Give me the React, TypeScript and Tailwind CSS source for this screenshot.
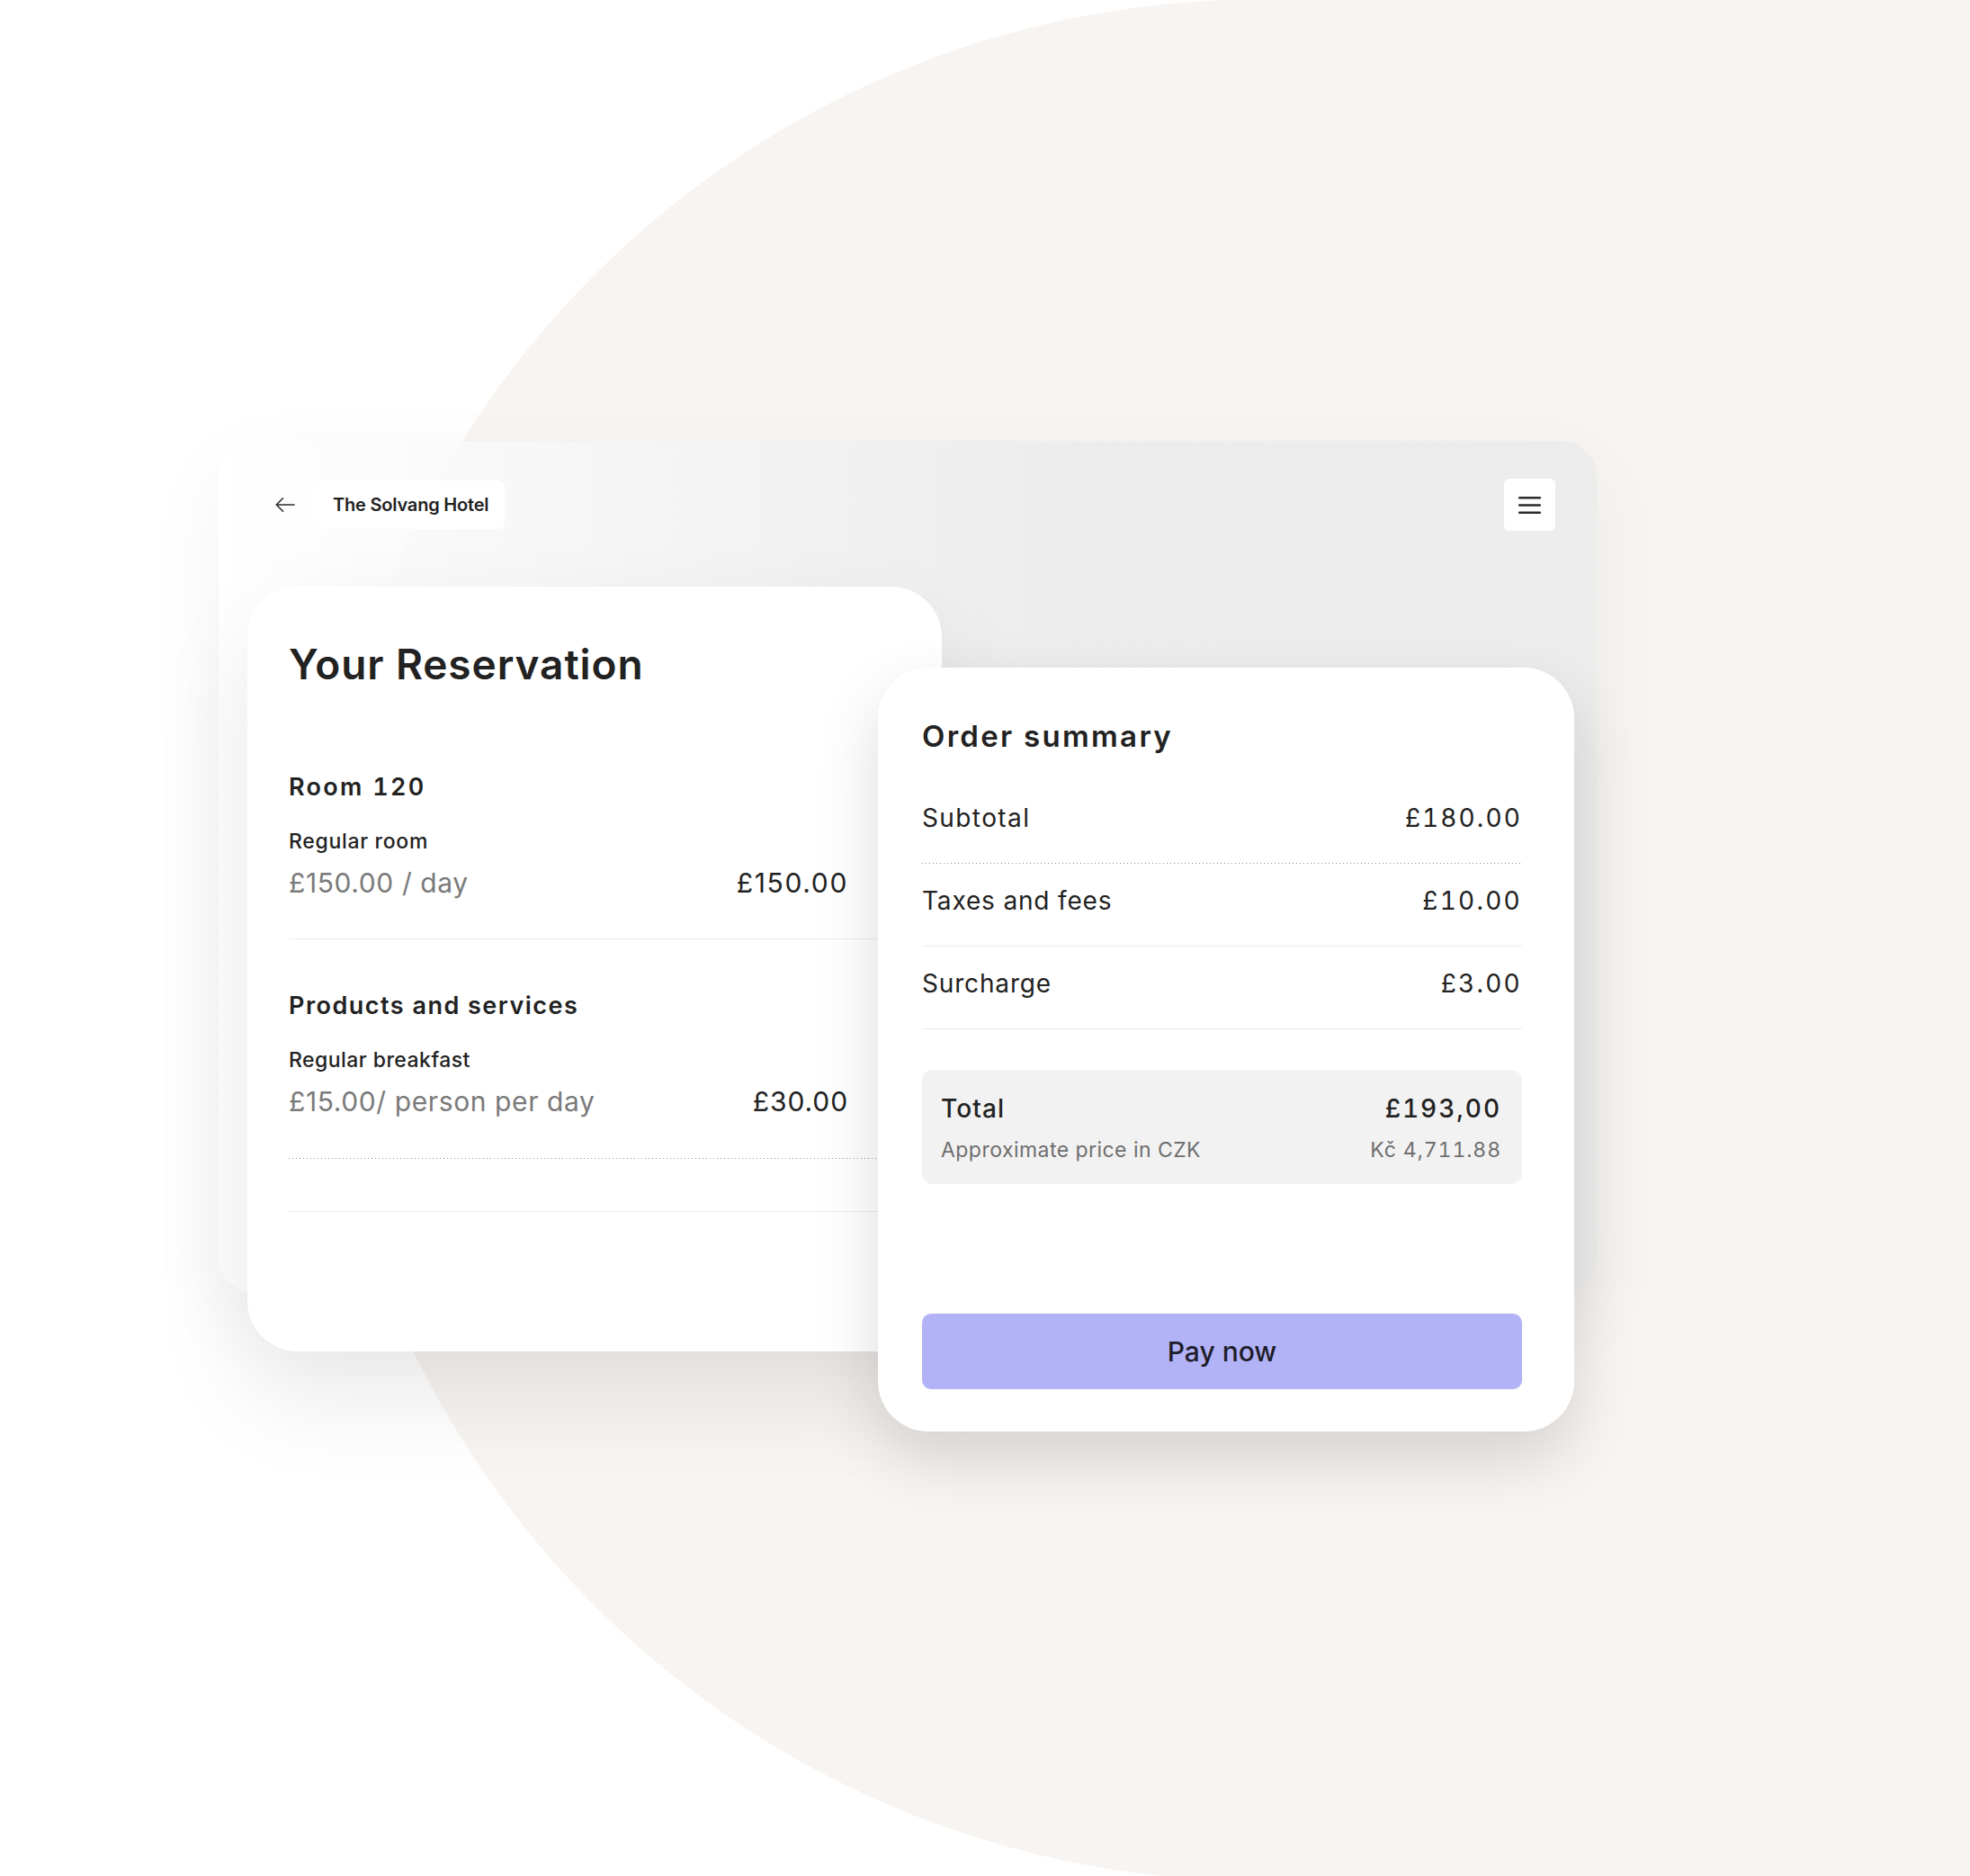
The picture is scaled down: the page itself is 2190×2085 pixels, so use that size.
const dotted =
  "h-px w-full bg-[linear-gradient(to_right,#8f8f8f_1px,transparent_1px)] bg-[length:4px_1px] bg-repeat-x";

function SummaryRow({
  label,
  value,
  line,
  labelTrack,
  valueTrack,
}: {
  label: string;
  value: string;
  line: "dotted" | "solid";
  labelTrack: string;
  valueTrack: string;
}) {
  return (
    <div className="flex flex-col">
      <div className="flex items-center justify-between pt-[27px] pb-[36px] text-[28px] leading-none text-[#222]">
        <span className={labelTrack}>{label}</span>
        <span className={"tabular-nums " + valueTrack}>{value}</span>
      </div>
      {line === "dotted" ? <div className={dotted} /> : <div className="h-px w-full bg-[#ebebeb]" />}
    </div>
  );
}

function App() {
  return (
    <div className="w-[2190px] h-[2085px] overflow-hidden bg-white bg-[radial-gradient(circle_at_1400px_1045px,#f7f4f1_1045px,transparent_1046px),linear-gradient(to_right,transparent_1400px,#f7f4f1_1400px)] pl-[243px] pt-[490px] font-['Inter',sans-serif] text-[#222]">
      <div className="w-[1532px] h-[947px] rounded-[40px] bg-[linear-gradient(to_right,rgba(255,255,255,0.85),rgba(236,236,236,0.9)_60%,rgba(236,236,236,0.95))] shadow-[0_30px_90px_rgba(0,0,0,0.05)] px-8 pt-[42px]">
        <header className="flex items-center justify-between h-[58px] pl-[31px] pr-[14px]">
          <div className="flex items-center gap-[20px]">
            <svg width="22" height="18" viewBox="0 0 22 18" fill="none" stroke="#2a2a2a" strokeWidth="1.6" strokeLinecap="round" strokeLinejoin="round">
              <path d="M21 9H1.5" />
              <path d="M8.5 1.8 1.3 9l7.2 7.2" />
            </svg>
            <div className="h-[54px] flex items-center pl-[22px] pr-[18px] rounded-lg bg-white text-[20px] font-semibold tracking-[-0.01em]">
              The Solvang Hotel
            </div>
          </div>
          <button className="w-[57px] h-[58px] rounded-[6px] bg-white flex items-center justify-center">
            <svg width="25" height="21" viewBox="0 0 25 21">
              <rect x="0" y="1" width="25" height="2.4" rx="1" fill="#2a2a2a" />
              <rect x="0" y="9.3" width="25" height="2.4" rx="1" fill="#2a2a2a" />
              <rect x="0" y="17.6" width="25" height="2.4" rx="1" fill="#2a2a2a" />
            </svg>
          </button>
        </header>

        <div className="flex items-start mt-[62px]">
          <section className="w-[772px] h-[850px] shrink-0 rounded-[56px] bg-white shadow-[0_50px_110px_rgba(0,0,0,0.09)] pt-[63px] px-[46px]">
            <h1 className="text-[46px] leading-none font-semibold tracking-[0.02em]">Your Reservation</h1>

            <h2 className="mt-[100px] text-[27px] leading-none font-semibold tracking-[0.085em] tabular-nums">Room 120</h2>
            <p className="mt-[36px] text-[23px] leading-none font-medium tracking-[0.03em]">Regular room</p>
            <div className="mt-[19px] flex items-center justify-between pr-[58px] text-[30px] leading-none">
              <span className="text-[#7a7a7a] tracking-[0.02em]">£150.00 / day</span>
              <span className="tracking-[0.055em]">£150.00</span>
            </div>
            <div className="mt-[47px] h-px w-full bg-[#ececec]" />

            <h2 className="mt-[60px] text-[27px] leading-none font-semibold tracking-[0.055em]">Products and services</h2>
            <p className="mt-[36px] text-[23px] leading-none font-medium tracking-[0.02em]">Regular breakfast</p>
            <div className="mt-[19px] flex items-center justify-between pr-[58px] text-[30px] leading-none">
              <span className="text-[#7a7a7a] tracking-[0.02em]">£15.00/ person per day</span>
              <span className="tracking-[0.03em]">£30.00</span>
            </div>
            <div className={"mt-[48px] " + dotted} />
            <div className="mt-[58px] h-px w-full bg-[#ececec]" />
          </section>

          <section className="w-[774px] shrink-0 -ml-[71px] mt-[90px] rounded-[56px] bg-white shadow-[0_30px_70px_rgba(0,0,0,0.14)] pt-[60px] pb-[47px] pl-[49px] pr-[58px]">
            <h2 className="text-[33px] leading-none font-semibold tracking-[0.07em]">Order summary</h2>
            <div className="mt-[33px]">
              <SummaryRow label="Subtotal" value="£180.00" line="dotted" labelTrack="tracking-[0.05em]" valueTrack="tracking-[0.075em]" />
              <SummaryRow label="Taxes and fees" value="£10.00" line="solid" labelTrack="tracking-[0.03em]" valueTrack="tracking-[0.08em]" />
              <SummaryRow label="Surcharge" value="£3.00" line="solid" labelTrack="tracking-[0.03em]" valueTrack="tracking-[0.08em]" />
            </div>

            <div className="mt-[45px] rounded-xl bg-[#f2f2f2] pt-[29px] pb-[26px] pl-[21px] pr-[23px]">
              <div className="flex items-center justify-between text-[28px] leading-none font-medium">
                <span className="tracking-[0.04em]">Total</span>
                <span className="tracking-[0.07em] tabular-nums">£193,00</span>
              </div>
              <div className="mt-[21px] flex items-center justify-between text-[23px] leading-none text-[#6e6e6e]">
                <span className="tracking-[0.02em]">Approximate price in CZK</span>
                <span className="tracking-[0.04em] tabular-nums">Kč 4,711.88</span>
              </div>
            </div>

            <button className="mt-[144px] w-full h-[84px] rounded-[10px] bg-[#b2b2f7] text-[30px] font-medium text-[#1e1e2a]">
              Pay now
            </button>
          </section>
        </div>
      </div>
    </div>
  );
}

export default App;
